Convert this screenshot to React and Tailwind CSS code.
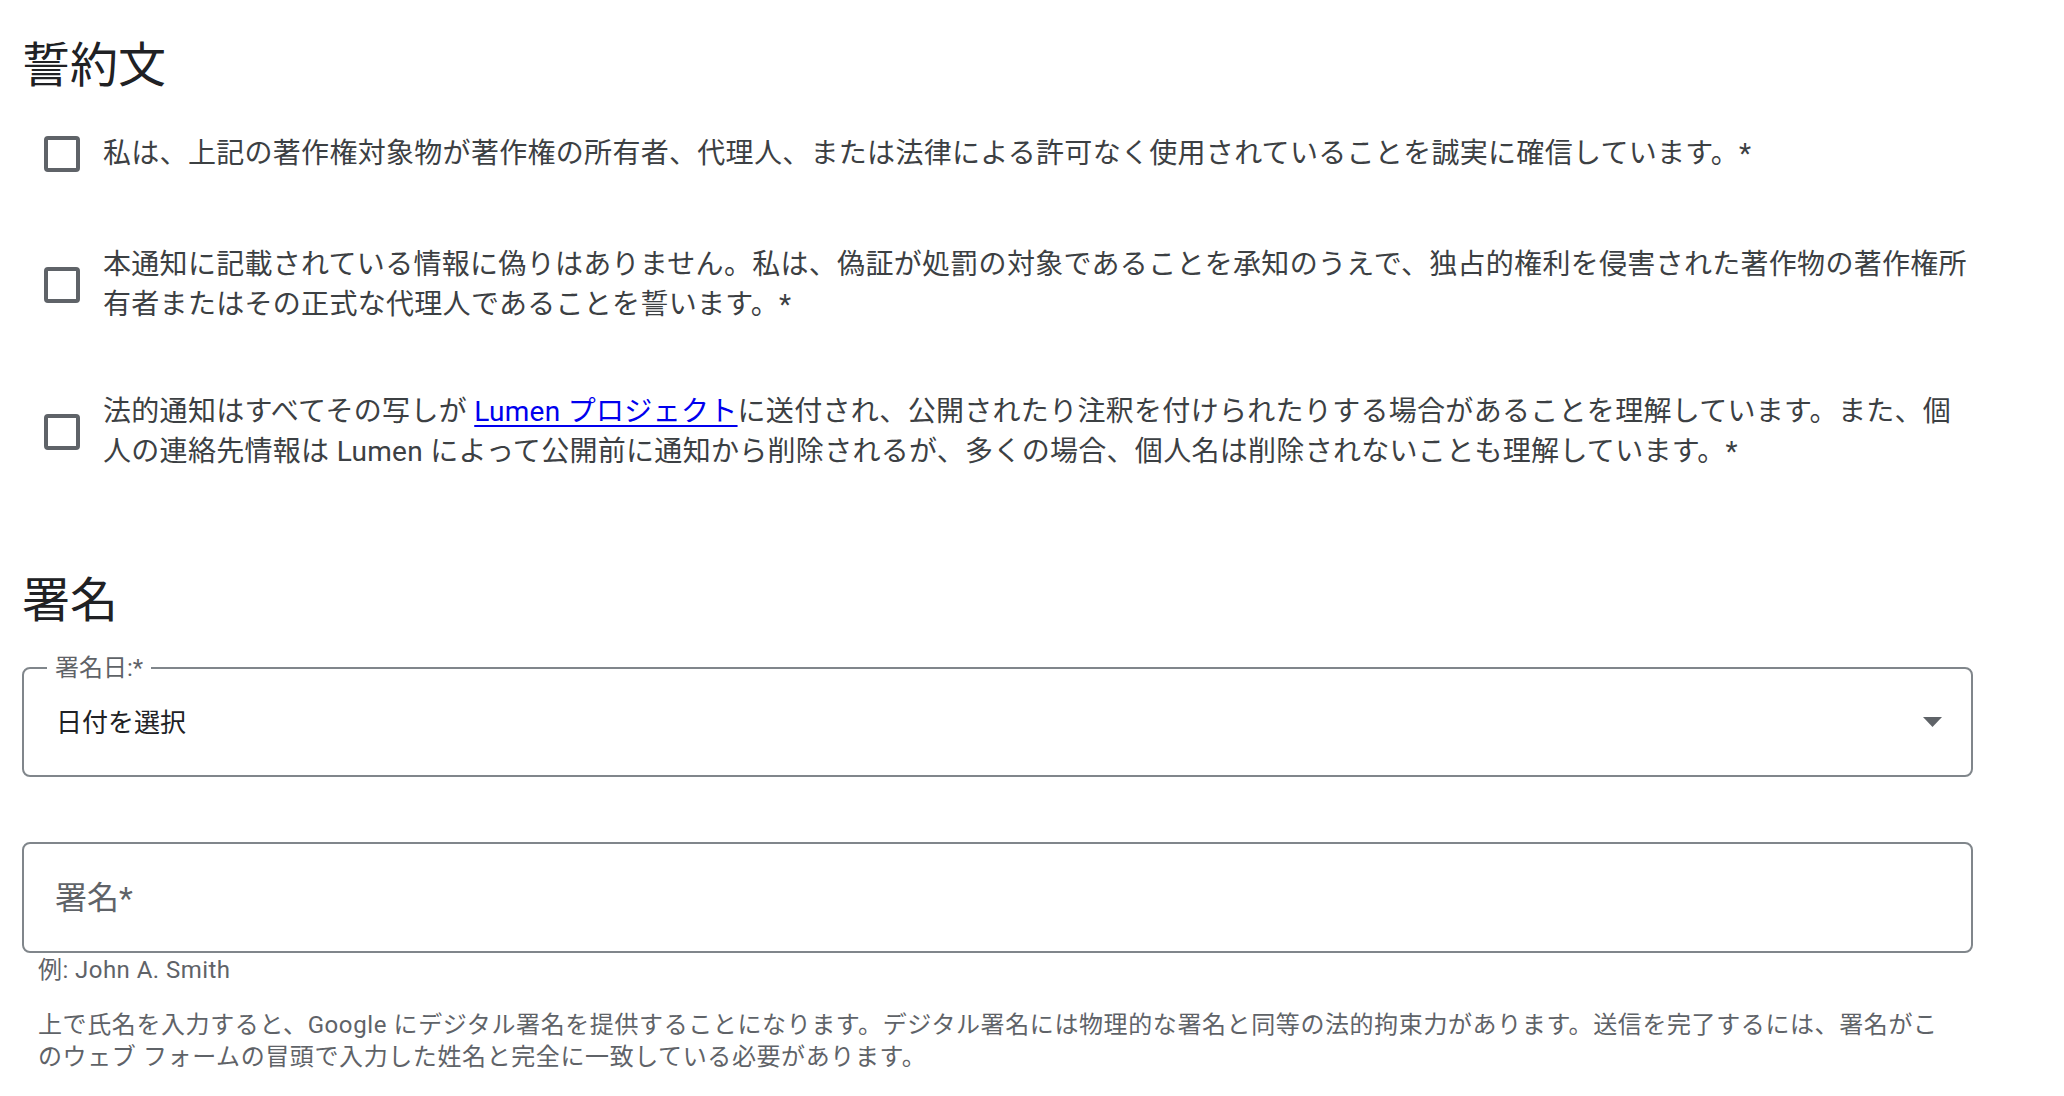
import React from "react";

const FONT = { fontFamily: "Roboto, 'Noto Sans CJK JP', sans-serif" };

function Box() {
  return <div className="w-[36px] h-[36px] shrink-0 border-[4px] border-[#5f6368] rounded-[4px] bg-white" />;
}

function Item({ children, className = "" }) {
  return (
    <div className={"flex items-center " + className}>
      <div className="ml-[22px] mr-[23px] flex">
        <Box />
      </div>
      <div className="flex-1 text-[28px] leading-[40px] tracking-[0.3px] text-[#3c4043]">{children}</div>
    </div>
  );
}

export default function App() {
  return (
    <div className="bg-white min-h-[1096px] w-full overflow-hidden" style={FONT}>
      <div className="ml-[22px] w-[1951px] pt-[38px]">
        <h2 className="text-[48px] leading-[56px] font-normal text-[#202124]">誓約文</h2>
        <div className="mt-[40px] flex flex-col">
          <Item>
            私は、上記の著作権対象物が著作権の所有者、代理人、または法律による許可なく使用されていることを誠実に確信しています。*
          </Item>
          <Item className="mt-[71px]">
            本通知に記載されている情報に偽りはありません。私は、偽証が処罰の対象であることを承知のうえで、独占的権利を侵害された著作物の著作権所有者またはその正式な代理人であることを誓います。*
          </Item>
          <Item className="mt-[67px]">
            法的通知はすべてその写しが{" "}
            <a href="#" className="text-[#0000ee] underline underline-offset-[4px]">
              Lumen プロジェクト
            </a>
            に送付され、公開されたり注釈を付けられたりする場合があることを理解しています。また、個人の連絡先情報は Lumen によって公開前に通知から削除されるが、多くの場合、個人名は削除されないことも理解しています。*
          </Item>
        </div>

        <h2 className="mt-[101px] text-[48px] leading-[56px] font-normal text-[#202124]">署名</h2>

        <div className="relative mt-[38px] h-[110px] border-2 border-[#80868b] rounded-[8px] flex items-center pl-[32px] pr-[29px]">
          <span className="absolute left-[23px] top-[-13px] bg-white px-[8px] text-[24px] leading-[24px] text-[#5f6368]">
            署名日:*
          </span>
          <span className="flex-1 text-[26px] leading-[32px] text-[#202124] mt-[2px]">日付を選択</span>
          <svg width="19" height="10" viewBox="0 0 19 10" className="shrink-0">
            <path d="M0 0 L19 0 L9.5 10 Z" fill="#5f6368" />
          </svg>
        </div>

        <div className="mt-[65px] h-[111px] border-2 border-[#80868b] rounded-[8px] flex items-center pl-[31px]">
          <span className="text-[32px] leading-[40px] text-[#5f6368]">署名*</span>
        </div>

        <div className="pl-[16px] text-[24px] leading-[32px] tracking-[0.45px] text-[#5f6368] mt-[1px]">例: John A. Smith</div>
        <p className="mt-[23px] ml-[16px] w-[1905px] text-[24px] leading-[32px] tracking-[0.6px] text-[#5f6368]">
          上で氏名を入力すると、Google にデジタル署名を提供することになります。デジタル署名には物理的な署名と同等の法的拘束力があります。送信を完了するには、署名がこのウェブ フォームの冒頭で入力した姓名と完全に一致している必要があります。
        </p>
      </div>
    </div>
  );
}
